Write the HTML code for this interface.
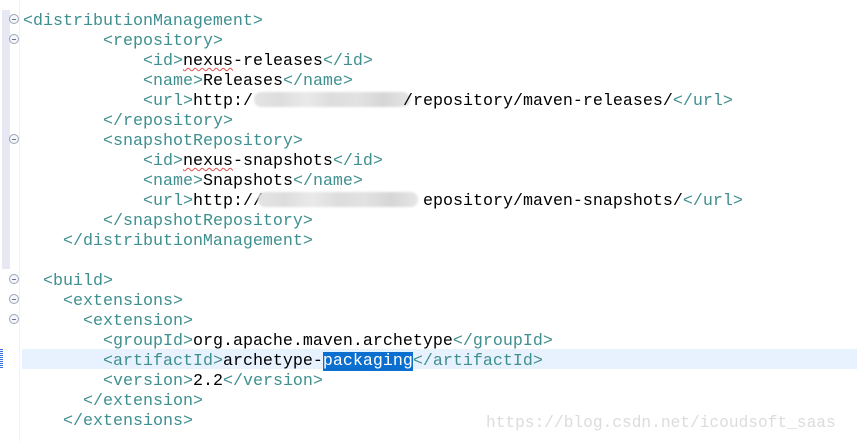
<!DOCTYPE html>
<html><head><meta charset="utf-8"><style>
html,body{margin:0;padding:0;background:#fff;width:857px;height:441px;overflow:hidden;position:relative}
.band{position:absolute;left:2px;top:10px;width:8px;height:259px;background:#e8e8f4}
.sep{position:absolute;left:19px;top:0;width:1px;height:441px;background:#f2f2f2}
.cur{position:absolute;left:22px;top:349px;width:835px;height:20px;background:#e8f2fe}
.curm{position:absolute;left:0;top:349px;width:3px;height:20px;background:repeating-linear-gradient(#3a6fd8 0 1px,#fff 1px 2px)}
.l{position:absolute;height:20px;line-height:20px;font-family:"Liberation Mono",monospace;font-size:16.67px;color:#000;white-space:pre;margin-top:3px}
.t{color:#3f8f8f}
.f{position:absolute;left:9px;width:10px;height:10px;border:1px solid #9aa6b8;border-radius:50%;box-sizing:border-box;background:#f4f6f9}
.f:after{content:"";position:absolute;left:2px;top:4px;width:4px;height:1px;background:#6a768a}
.blur{position:absolute;height:15px;border-radius:7px;background:linear-gradient(90deg,#e4e4e4,#ddd,#eaeaea,#ddd,#e2e2e2,#d6d6d6,#e6e6e6);filter:blur(1px)}
.sel{background:#0a6fce;color:#fff}
.wm{position:absolute;left:486px;top:414px;font-family:"Liberation Mono",monospace;font-size:16.2px;color:#dcdcdc;white-space:pre}
.sq{text-decoration:underline wavy #e05050;text-decoration-thickness:1px;text-underline-offset:2px}
</style></head><body>
<div class="band"></div><div class="sep"></div>
<div class="cur"></div><div class="curm"></div>
<div class="f" style="top:14px"></div>
<div class="f" style="top:34px"></div>
<div class="f" style="top:134px"></div>
<div class="f" style="top:274px"></div>
<div class="f" style="top:294px"></div>
<div class="f" style="top:314px"></div>

<div class="l" style="left:23px;top:9px"><span class="t">&lt;distributionManagement&gt;</span></div>
<div class="l" style="left:103px;top:29px"><span class="t">&lt;repository&gt;</span></div>
<div class="l" style="left:143px;top:49px"><span class="t">&lt;id&gt;</span><span class="sq">nexus</span>-releases<span class="t">&lt;/id&gt;</span></div>
<div class="l" style="left:143px;top:69px"><span class="t">&lt;name&gt;</span>Releases<span class="t">&lt;/name&gt;</span></div>
<div class="l" style="left:143px;top:89px"><span class="t">&lt;url&gt;</span>http:/</div>
<div class="blur" style="left:254px;top:92px;width:156px"></div>
<div class="l" style="left:403px;top:89px">/repository/maven-releases/<span class="t">&lt;/url&gt;</span></div>
<div class="l" style="left:103px;top:109px"><span class="t">&lt;/repository&gt;</span></div>
<div class="l" style="left:103px;top:129px"><span class="t">&lt;snapshotRepository&gt;</span></div>
<div class="l" style="left:143px;top:149px"><span class="t">&lt;id&gt;</span><span class="sq">nexus</span>-snapshots<span class="t">&lt;/id&gt;</span></div>
<div class="l" style="left:143px;top:169px"><span class="t">&lt;name&gt;</span>Snapshots<span class="t">&lt;/name&gt;</span></div>
<div class="l" style="left:143px;top:189px"><span class="t">&lt;url&gt;</span>http://</div>
<div class="blur" style="left:258px;top:192px;width:160px"></div>
<div class="l" style="left:423px;top:189px">epository/maven-snapshots/<span class="t">&lt;/url&gt;</span></div>
<div class="l" style="left:103px;top:209px"><span class="t">&lt;/snapshotRepository&gt;</span></div>
<div class="l" style="left:63px;top:229px"><span class="t">&lt;/distributionManagement&gt;</span></div>
<div class="l" style="left:43px;top:269px"><span class="t">&lt;build&gt;</span></div>
<div class="l" style="left:63px;top:289px"><span class="t">&lt;extensions&gt;</span></div>
<div class="l" style="left:83px;top:309px"><span class="t">&lt;extension&gt;</span></div>
<div class="l" style="left:103px;top:329px"><span class="t">&lt;groupId&gt;</span>org.apache.maven.archetype<span class="t">&lt;/groupId&gt;</span></div>
<div class="l" style="left:103px;top:349px"><span class="t">&lt;artifactId&gt;</span>archetype-<span class="sel">packaging</span><span class="t">&lt;/artifactId&gt;</span></div>
<div class="l" style="left:103px;top:369px"><span class="t">&lt;version&gt;</span>2.2<span class="t">&lt;/version&gt;</span></div>
<div class="l" style="left:83px;top:389px"><span class="t">&lt;/extension&gt;</span></div>
<div class="l" style="left:63px;top:409px"><span class="t">&lt;/extensions&gt;</span></div>
<div class="wm">https://blog.csdn.net/icoudsoft_saas</div>
</body></html>
